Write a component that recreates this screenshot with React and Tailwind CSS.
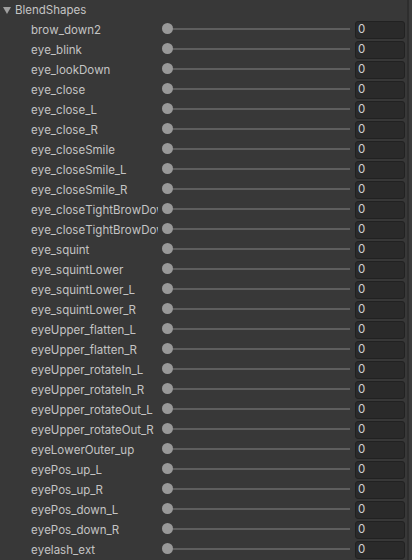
import React from "react";

const names = [
  "brow_down2",
  "eye_blink",
  "eye_lookDown",
  "eye_close",
  "eye_close_L",
  "eye_close_R",
  "eye_closeSmile",
  "eye_closeSmile_L",
  "eye_closeSmile_R",
  "eye_closeTightBrowDown_L",
  "eye_closeTightBrowDown_R",
  "eye_squint",
  "eye_squintLower",
  "eye_squintLower_L",
  "eye_squintLower_R",
  "eyeUpper_flatten_L",
  "eyeUpper_flatten_R",
  "eyeUpper_rotateIn_L",
  "eyeUpper_rotateIn_R",
  "eyeUpper_rotateOut_L",
  "eyeUpper_rotateOut_R",
  "eyeLowerOuter_up",
  "eyePos_up_L",
  "eyePos_up_R",
  "eyePos_down_L",
  "eyePos_down_R",
  "eyelash_ext",
];

function Row({ name }) {
  return (
    <div className="flex h-[20px] items-center">
      <div className="w-[31px] shrink-0" />
      <div className="w-[127px] shrink-0 overflow-hidden whitespace-nowrap text-[11.5px] leading-[20px] text-[#c4c4c4]">
        {name}
      </div>
      <div className="relative h-[20px] w-[192px] shrink-0">
        <div className="absolute left-[9px] right-0 top-[8px] h-[2px] bg-[#5e5e5e]" />
        <div className="absolute left-[4px] top-[3px] h-[11px] w-[11px] rounded-full bg-[#999999]" />
      </div>
      <div className="ml-[5px] flex h-[18px] w-[50px] shrink-0 items-center rounded-[3px] border border-[#212121] bg-[#2a2a2a] pl-[2px] text-[11.5px] text-[#d2d2d2]">
        0
      </div>
    </div>
  );
}

export default function App() {
  return (
    <div className="flex h-[560px] w-[412px] overflow-hidden bg-[#383838] [font-family:Inter,'Noto_Sans',sans-serif] [font-kerning:none]">
      <div className="w-[407px] shrink-0">
        <div className="flex h-[20px] items-center">
          <div className="ml-[3px] mr-[4px] h-0 w-0 border-x-[4px] border-t-[7px] border-x-transparent border-t-[#a0a0a0]" />
          <span className="text-[11.5px] leading-[20px] text-[#c4c4c4]">BlendShapes</span>
        </div>
        {names.map((n) => (
          <Row key={n} name={n} />
        ))}
      </div>
      <div className="w-[2px] shrink-0 bg-[#2e2e2e]" />
      <div className="w-[3px] shrink-0 bg-[#3c3c3c]" />
    </div>
  );
}
